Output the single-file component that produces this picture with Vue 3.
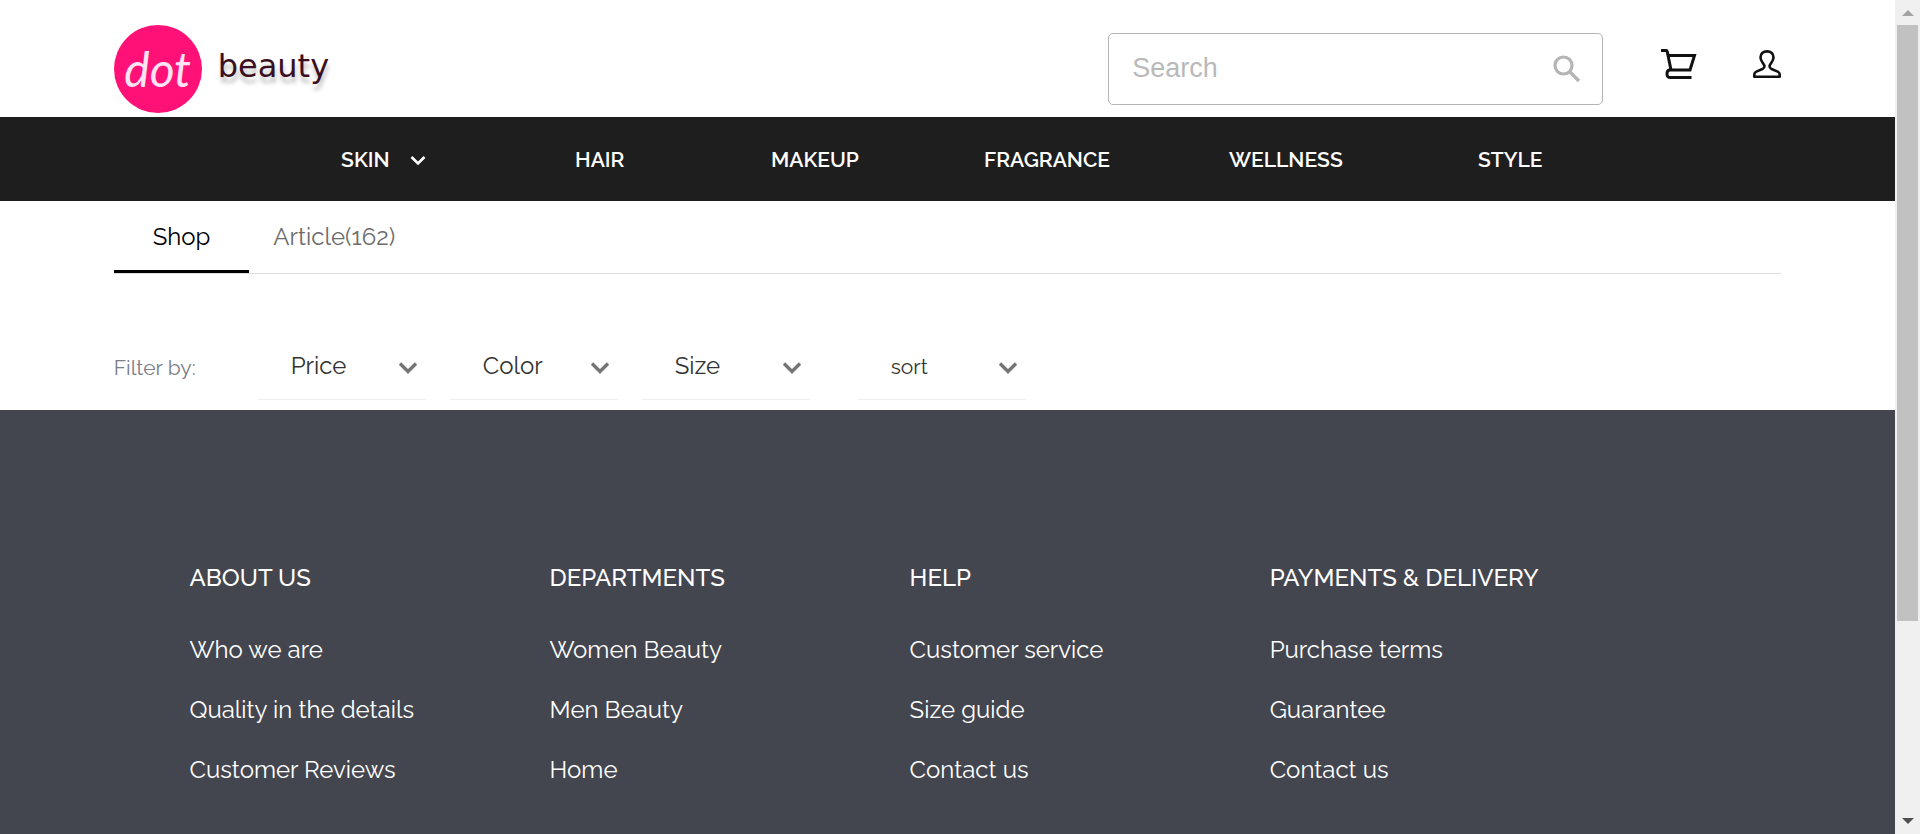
<script setup>
const navItems = [
  { label: 'SKIN', menu: true },
  { label: 'HAIR' },
  { label: 'MAKEUP' },
  { label: 'FRAGRANCE' },
  { label: 'WELLNESS' },
  { label: 'STYLE' },
]

const filters = [
  { id: 'price', label: 'Price' },
  { id: 'color', label: 'Color' },
  { id: 'size', label: 'Size' },
  { id: 'sort', label: 'sort', small: true },
]

const columns = [
  { title: 'ABOUT US', links: ['Who we are', 'Quality in the details', 'Customer Reviews'] },
  { title: 'DEPARTMENTS', links: ['Women Beauty', 'Men Beauty', 'Home'] },
  { title: 'HELP', links: ['Customer service', 'Size guide', 'Contact us'] },
  { title: 'PAYMENTS & DELIVERY', links: ['Purchase terms', 'Guarantee', 'Contact us'] },
]
</script>

<template>
  <div class="shell">
    <div class="page">
      <header class="top">
        <a class="brand" href="#">
          <span class="brand-dot">dot</span>
          <span class="brand-name">beauty</span>
        </a>
        <form class="search" role="search" @submit.prevent>
          <input type="search" placeholder="Search" aria-label="Search" />
          <button type="submit" aria-label="Submit search">
            <svg width="28" height="28" viewBox="0 0 28 28" fill="none" stroke="#b5b5b5">
              <circle cx="10.5" cy="10.5" r="8.5" stroke-width="3.2" />
              <path d="M17 17l9 9" stroke-width="3.6" />
            </svg>
          </button>
        </form>
        <div class="actions">
          <a href="#" aria-label="Cart">
            <svg width="36" height="30" viewBox="0 0 36 30" fill="none" stroke="#111" stroke-width="3">
              <path d="M0 1.5h5.2q.8 0 1 1L10 21" />
              <path d="M7 6.500h26.500L29 21H9q-3 0-3 3.800T9 28.500h21.500" />
            </svg>
          </a>
          <a href="#" aria-label="Account">
            <svg width="28" height="28" viewBox="0 0 28 28" fill="none" stroke="#111" stroke-width="2.600" stroke-linejoin="round">
              <path d="M1.300 26.700v-2.200q0-2 2-2.900l6.200-2.600q2.200-1 1.900-3.200c-.2-1.200-1-1.700-1.800-3.100C8.300 10.700 7.500 9.500 7.500 7.500 7.500 3.800 10 1.400 14 1.400s6.500 2.400 6.500 6.100c0 2-.8 3.200-2.100 5.200-.8 1.400-1.600 1.900-1.800 3.100q-.3 2.200 1.900 3.200l6.200 2.600q2 .9 2 2.900v2.200z" />
            </svg>
          </a>
        </div>
      </header>

      <nav class="menu" aria-label="Categories">
        <a v-for="item in navItems" :key="item.label" href="#">
          {{ item.label }}
          <svg v-if="item.menu" width="16" height="16" viewBox="0 0 16 16" fill="none" stroke="#fff" stroke-width="2.600">
            <path d="M1.500 6L8 12.500 14.500 6" />
          </svg>
        </a>
      </nav>

      <main>
        <div class="tabs" role="tablist">
          <button class="tab active" role="tab" aria-selected="true">Shop</button>
          <button class="tab" role="tab" aria-selected="false">Article(162)</button>
        </div>

        <div class="filters">
          <span class="filters-label">Filter by:</span>
          <div v-for="f in filters" :key="f.id" class="filter" :class="{ small: f.small }">
            <select :id="f.id" :aria-label="f.label">
              <option>{{ f.label }}</option>
            </select>
            <svg width="20" height="14" viewBox="0 0 20 14" fill="none" stroke="#757575" stroke-width="3.400">
              <path d="M2 2.500l8 8 8-8" />
            </svg>
          </div>
        </div>
      </main>

      <footer class="footer">
        <section v-for="col in columns" :key="col.title">
          <h2>{{ col.title }}</h2>
          <ul>
            <li v-for="link in col.links" :key="link"><a href="#">{{ link }}</a></li>
          </ul>
        </section>
      </footer>
    </div>

    <div class="scrollbar" aria-hidden="true">
      <svg width="12" height="6" viewBox="0 0 12 6"><path d="M0 6L6 0l6 6z" fill="#a3a3a3" /></svg>
      <div class="track"><div class="thumb"></div></div>
      <svg width="12" height="6" viewBox="0 0 12 6"><path d="M0 0l6 6 6-6z" fill="#505050" /></svg>
    </div>
  </div>
</template>

<style>
body {
  margin: 0;
}
</style>

<style scoped>
.shell {
  display: flex;
  height: 100vh;
  background: #fff;
  font-family: Raleway, Lato, sans-serif;
  font-size: 24px;
}
.page {
  flex: 1;
  min-width: 0;
  display: flex;
  flex-direction: column;
  overflow: hidden;
}
a {
  color: inherit;
  text-decoration: none;
}
.top {
  display: flex;
  align-items: center;
  box-sizing: border-box;
  min-height: 117px;
  padding: 20px 6% 0;
}
.brand {
  display: flex;
  align-items: center;
  gap: 16px;
  margin-right: auto;
}
.brand-dot {
  display: flex;
  align-items: center;
  justify-content: center;
  width: 88px;
  height: 88px;
  border-radius: 50%;
  background: #ff1178;
  color: #ffe3f3;
  font: italic 400 48px Lato, sans-serif;
}
.brand-name {
  padding-bottom: 6px;
  color: #3a1020;
  font: 32px "DejaVu Sans", sans-serif;
  text-shadow: 1px 6px 4px rgba(0, 0, 0, 0.25);
}
.search {
  display: flex;
  align-items: center;
  box-sizing: border-box;
  width: 495px;
  height: 72px;
  margin-right: 58px;
  padding: 0 21px 0 23px;
  border: 1px solid #b5b5b5;
  border-radius: 5px;
}
.search input {
  flex: 1;
  min-width: 0;
  padding: 0;
  border: 0;
  outline: 0;
  background: none;
  font: 27px "Liberation Sans", Arial, sans-serif;
}
.search input::placeholder {
  color: #b9b9b9;
}
.search button {
  display: flex;
  padding: 0;
  border: 0;
  background: none;
}
.actions {
  display: flex;
  align-items: center;
  gap: 56px;
  padding-bottom: 10px;
}
.actions a {
  display: flex;
}
.menu {
  display: grid;
  grid-template-columns: 234fr 196fr 213fr 245fr 249fr 417fr;
  align-items: center;
  min-height: 84px;
  padding-left: 18%;
  background: #1e1e1e;
  color: #fff;
  font-size: 21px;
  font-weight: 600;
}
.menu a {
  display: flex;
  align-items: center;
  gap: 20px;
}
main {
  padding: 0 6%;
}
.tabs {
  display: flex;
  border-bottom: 1px solid #dedede;
}
.tab {
  height: 72px;
  padding: 2px 24px 0;
  border: 0;
  border-bottom: 3px solid transparent;
  background: none;
  color: #6c6c6c;
  font: inherit;
}
.tab.active {
  padding: 2px 39px 0;
  border-color: #000;
  color: #000;
}
.filters {
  display: flex;
  align-items: center;
  gap: 24px;
  padding: 60px 0 10px;
}
.filters-label {
  width: 120px;
  color: #7c7d87;
  font-size: 21px;
}
.filter {
  position: relative;
  display: flex;
  width: 168px;
}
.filter select {
  appearance: none;
  width: 100%;
  height: 66px;
  padding: 0 40px 2px 33px;
  border: 0;
  border-bottom: 1px solid #efefef;
  border-radius: 0;
  background: none;
  color: #333;
  font: inherit;
}
.filter.small {
  margin-left: 24px;
}
.filter.small select {
  padding-bottom: 0;
  font-size: 21px;
}
.filter svg {
  position: absolute;
  right: 8px;
  top: 27px;
  pointer-events: none;
}
.footer {
  flex: 1;
  display: grid;
  grid-template-columns: repeat(4, 1fr);
  align-content: start;
  padding: 148px 14% 0 10%;
  background: #44464f;
  color: #fff;
}
.footer h2 {
  margin: 0 0 22px;
  font-size: 24px;
  line-height: 40px;
  font-weight: 500;
  white-space: nowrap;
}
.footer ul {
  margin: 0;
  padding: 0;
  list-style: none;
}
.footer li {
  line-height: 60px;
}
.scrollbar {
  display: flex;
  flex-direction: column;
  align-items: center;
  box-sizing: border-box;
  width: 25px;
  padding: 10px 2px;
  gap: 9px;
  background: #f0f0f0;
}
.track {
  flex: 1;
  width: 100%;
}
.thumb {
  height: 76%;
  background: #c1c1c1;
}
</style>
